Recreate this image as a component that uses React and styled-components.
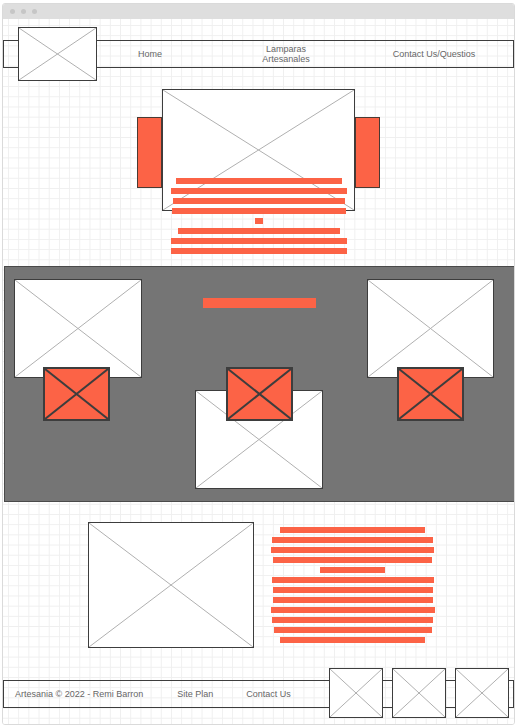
import React from "react";
import styled, { createGlobalStyle } from "styled-components";

const ORANGE = "#fc6346";
const DARK = "#3d3d3d";

const GlobalStyle = createGlobalStyle`
  html, body { margin: 0; padding: 0; background: #ffffff; }
  body { font-family: "Liberation Sans", Arial, sans-serif; }
  * { box-sizing: border-box; }
`;

const Frame = styled.div`
  margin: 3px 2px 2px 2px;
  height: 722px;
  width: 513px;
  border: 1px solid #dadada;
  border-radius: 3px;
  display: flex;
  flex-direction: column;
  overflow: hidden;
  background: #fff;
`;

const TitleBar = styled.div`
  height: 15px;
  flex: none;
  background: #dedede;
  display: flex;
  align-items: center;
  gap: 6px;
  padding-left: 7px;
`;

const Dot = styled.span`
  width: 5px;
  height: 5px;
  border-radius: 50%;
  background: #c6c6c6;
`;

const Canvas = styled.div`
  flex: 1;
  display: flex;
  flex-direction: column;
  background-color: #fff;
  background-image:
    linear-gradient(to right, #efefef 1px, transparent 1px),
    linear-gradient(to bottom, #efefef 1px, transparent 1px);
  background-size: 10.2px 10.2px;
  background-position: 5px 6px;
`;

/* ---------- placeholders ---------- */

const PlaceholderBox = styled.div`
  position: relative;
  flex: none;
  width: ${(p) => p.$w}px;
  height: ${(p) => p.$h}px;
  background: #ffffff;
  border: 1px solid ${DARK};
  z-index: ${(p) => p.$z || "auto"};
  svg { display: block; width: 100%; height: 100%; }
`;

const Placeholder = ({ w, h, z, className }) => (
  <PlaceholderBox $w={w} $h={h} $z={z} className={className}>
    <svg viewBox="0 0 100 100" preserveAspectRatio="none">
      <line x1="0" y1="0" x2="100" y2="100" stroke="#b0b0b0" strokeWidth="1" vectorEffect="non-scaling-stroke" />
      <line x1="100" y1="0" x2="0" y2="100" stroke="#b0b0b0" strokeWidth="1" vectorEffect="non-scaling-stroke" />
    </svg>
  </PlaceholderBox>
);

const AccentBoxWrap = styled.div`
  position: relative;
  z-index: 2;
  flex: none;
  width: 67px;
  height: 54px;
  background: ${ORANGE};
  border: 2px solid ${DARK};
  margin-left: ${(p) => p.$ml}px;
  margin-top: ${(p) => p.$mt}px;
  svg { display: block; width: 100%; height: 100%; }
`;

const AccentBox = ({ ml, mt }) => (
  <AccentBoxWrap $ml={ml} $mt={mt}>
    <svg viewBox="0 0 100 100" preserveAspectRatio="none">
      <line x1="0" y1="0" x2="100" y2="100" stroke={DARK} strokeWidth="2" vectorEffect="non-scaling-stroke" />
      <line x1="100" y1="0" x2="0" y2="100" stroke={DARK} strokeWidth="2" vectorEffect="non-scaling-stroke" />
    </svg>
  </AccentBoxWrap>
);

/* ---------- header ---------- */

const HeaderBar = styled.header`
  margin-top: 21px;
  height: 28px;
  border: 1px solid ${DARK};
  display: flex;
  align-items: center;
`;

const Logo = styled(Placeholder)`
  margin: -14px 0 -14px 14px;
`;

const Nav = styled.nav`
  display: grid;
  grid-template-columns: 106px 166px 130px;
  align-items: center;
`;

const NavItem = styled.span`
  text-align: center;
  font-size: 9px;
  line-height: 10px;
  color: #666666;
`;

/* ---------- hero ---------- */

const Hero = styled.section`
  margin-top: 21px;
  display: flex;
  flex-direction: column;
  align-items: center;
`;

const HeroStage = styled.div`
  display: flex;
  align-items: flex-start;
`;

const SideBlock = styled.div`
  width: 25px;
  height: 71px;
  margin-top: 28px;
  background: ${ORANGE};
  border: 1px solid #4a3a33;
`;

const BarStack = styled.div`
  position: relative;
  z-index: 2;
  display: flex;
  flex-direction: column;
  align-items: center;
  gap: 4px;
  margin-top: ${(p) => p.$mt}px;
  margin-left: ${(p) => p.$ml || 0}px;
  width: ${(p) => (p.$w ? `${p.$w}px` : "auto")};
`;

const Bar = styled.div`
  height: 6px;
  background: ${ORANGE};
  flex: none;
`;

/* ---------- gallery ---------- */

const Gallery = styled.section`
  margin: 12px 0 0 1px;
  height: 236px;
  width: 511px;
  background: #757575;
  border: 1px solid #4a4a4a;
  display: flex;
  align-items: flex-start;
  padding: 12px 0 0 9px;
`;

const GalleryCol = styled.div`
  display: flex;
  flex-direction: column;
  align-items: flex-start;
  margin-left: ${(p) => p.$ml}px;
`;

const TitleStrip = styled.div`
  width: 113px;
  height: 10px;
  background: ${ORANGE};
  margin: 19px 0 0 8px;
`;

const ShiftedImage = styled(Placeholder)`
  margin-top: -31px;
`;

/* ---------- about ---------- */

const About = styled.section`
  margin-top: 20px;
  display: flex;
  align-items: flex-start;
  padding-left: 85px;
`;

/* ---------- footer ---------- */

const FooterBar = styled.footer`
  margin-top: 32px;
  height: 28px;
  border: 1px solid ${DARK};
  display: flex;
  align-items: center;
  padding-left: 11px;
`;

const FooterText = styled.span`
  font-size: 9px;
  color: #666666;
  white-space: nowrap;
  margin-right: ${(p) => p.$mr || 0}px;
`;

const FooterIcons = styled.div`
  margin: -13px 4px -11px auto;
  display: flex;
  gap: 9px;
`;

const heroBars = [166, 176, 172, 174, 8, 162, 176, 176];
const aboutBars = [145, 161, 163, 159, 65, 162, 160, 160, 164, 161, 158, 145];

export default function App() {
  return (
    <>
      <GlobalStyle />
      <Frame>
        <TitleBar>
          <Dot />
          <Dot />
          <Dot />
        </TitleBar>
        <Canvas>
          <HeaderBar>
            <Logo w={79} h={54} />
            <Nav>
              <NavItem>Home</NavItem>
              <NavItem>
                Lamparas
                <br />
                Artesanales
              </NavItem>
              <NavItem>Contact Us/Questios</NavItem>
            </Nav>
          </HeaderBar>

          <Hero>
            <HeroStage>
              <SideBlock />
              <Placeholder w={193} h={122} />
              <SideBlock />
            </HeroStage>
            <BarStack $mt={-33}>
              {heroBars.map((w, i) => (
                <Bar key={i} style={{ width: w }} />
              ))}
            </BarStack>
          </Hero>

          <Gallery>
            <GalleryCol $ml={0}>
              <Placeholder w={128} h={99} />
              <AccentBox ml={29} mt={-11} />
            </GalleryCol>
            <GalleryCol $ml={53}>
              <TitleStrip />
              <AccentBox ml={31} mt={59} />
              <ShiftedImage w={128} h={99} />
            </GalleryCol>
            <GalleryCol $ml={44}>
              <Placeholder w={127} h={99} />
              <AccentBox ml={30} mt={-11} />
            </GalleryCol>
          </Gallery>

          <About>
            <Placeholder w={166} h={126} />
            <BarStack $mt={5} $ml={16} $w={165}>
              {aboutBars.map((w, i) => (
                <Bar key={i} style={{ width: w }} />
              ))}
            </BarStack>
          </About>

          <FooterBar>
            <FooterText $mr={34}>Artesania © 2022 - Remi Barron</FooterText>
            <FooterText $mr={33}>Site Plan</FooterText>
            <FooterText>Contact Us</FooterText>
            <FooterIcons>
              <Placeholder w={54} h={50} />
              <Placeholder w={54} h={50} />
              <Placeholder w={54} h={50} />
            </FooterIcons>
          </FooterBar>
        </Canvas>
      </Frame>
    </>
  );
}
